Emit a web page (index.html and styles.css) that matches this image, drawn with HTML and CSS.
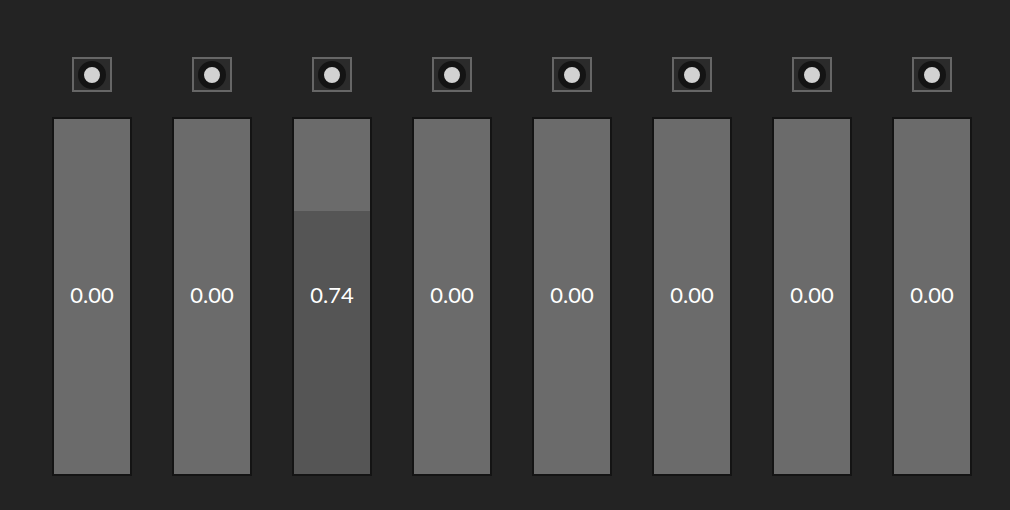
FILE: index.html
```html
<!DOCTYPE html>
<html lang="en">
<head>
  <meta charset="UTF-8" />
  <title>Faders</title>
  <link rel="stylesheet" href="styles.css">
</head>
<body>
  <div class="rack">
    <div class="channel">
      <button class="toggle"><span class="led"></span></button>
      <div class="fader"><div class="fill" style="height: 0%"></div><span class="value">0.00</span></div>
    </div>
    <div class="channel">
      <button class="toggle"><span class="led"></span></button>
      <div class="fader"><div class="fill" style="height: 0%"></div><span class="value">0.00</span></div>
    </div>
    <div class="channel">
      <button class="toggle"><span class="led"></span></button>
      <div class="fader"><div class="fill" style="height: 74%"></div><span class="value">0.74</span></div>
    </div>
    <div class="channel">
      <button class="toggle"><span class="led"></span></button>
      <div class="fader"><div class="fill" style="height: 0%"></div><span class="value">0.00</span></div>
    </div>
    <div class="channel">
      <button class="toggle"><span class="led"></span></button>
      <div class="fader"><div class="fill" style="height: 0%"></div><span class="value">0.00</span></div>
    </div>
    <div class="channel">
      <button class="toggle"><span class="led"></span></button>
      <div class="fader"><div class="fill" style="height: 0%"></div><span class="value">0.00</span></div>
    </div>
    <div class="channel">
      <button class="toggle"><span class="led"></span></button>
      <div class="fader"><div class="fill" style="height: 0%"></div><span class="value">0.00</span></div>
    </div>
    <div class="channel">
      <button class="toggle"><span class="led"></span></button>
      <div class="fader"><div class="fill" style="height: 0%"></div><span class="value">0.00</span></div>
    </div>
  </div>
</body>
</html>
```

FILE: styles.css
```css
* { margin: 0; padding: 0; box-sizing: border-box; }

html, body {
  width: 100%;
  height: 100%;
  background-color: #232323;
  font-family: 'Lato', sans-serif;
  color: #fff;
}

.rack {
  display: flex;
  gap: 40px;
  padding: 57px 0 0 52px;
}

.channel {
  display: flex;
  flex-direction: column;
  align-items: center;
  gap: 25px;
  width: 80px;
}

.toggle {
  width: 40px;
  height: 35px;
  display: flex;
  justify-content: center;
  align-items: center;
  background-color: #2b2b2b;
  border: 2px solid #666;
  cursor: pointer;
}

.led {
  width: 28px;
  height: 28px;
  border-radius: 50%;
  border: 6px solid #141414;
  background-color: #d2d2d2;
}

.fader {
  position: relative;
  width: 80px;
  height: 359px;
  background-color: #6b6b6b;
  border: 2px solid #141414;
  display: flex;
  justify-content: center;
  align-items: center;
}

.fill {
  position: absolute;
  left: 0;
  right: 0;
  bottom: 0;
  background-color: #555;
}

.value {
  position: relative;
  font-size: 22px;
  padding-bottom: 4px;
}
```
